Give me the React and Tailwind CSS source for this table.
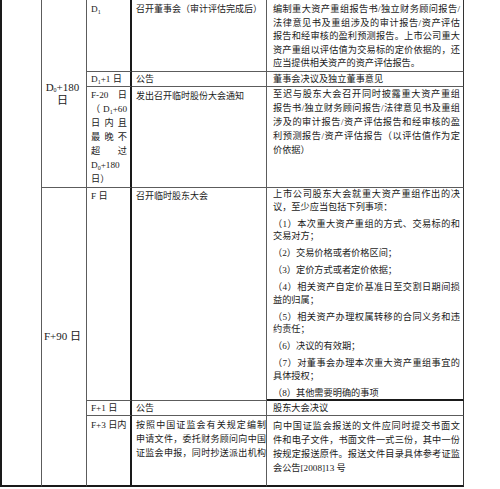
import React from "react";

// justified line block: every line but the last in a paragraph is stretched to full width
function Para({ lines, className = "" }) {
  return (
    <div className={className}>
      {lines.map((t, i) => (
        <div key={i} className={i < lines.length - 1 ? "[text-align-last:justify]" : ""}>
          {t}
        </div>
      ))}
    </div>
  );
}

const S = ({ children }) => <sub className="text-[6px]">{children}</sub>;

const thinR = "border-r border-r-[#5c5c5c]";
const thinB = "border-b border-b-[#5c5c5c]";
const thickB = "border-b-2 border-b-[#1a1a1a]";

const c2 = "col-start-3 border-r-2 border-r-[#1a1a1a] pl-[4px] pr-[3px]";
const c3 = "col-start-4 pl-[4px] text-[9px] " + thinR;
const c4 = "col-start-5 border-r border-r-[#333] pl-[6px] pr-[3px]";

export default function App() {
  return (
    <div className="h-[489px] w-[500px] overflow-hidden bg-white text-[9.2px] text-[#1a1a1a] [font-family:'Liberation_Serif','Noto_Sans_CJK_SC',serif]">
      <div className="grid w-[464px] grid-cols-[42px_45px_45px_135px_197px] grid-rows-[72px_15px_101px_213px_15px_71px]">
        {/* blank first column */}
        <div className={`col-start-1 row-start-1 row-span-6 border-l-2 border-l-[#1a1a1a] ${thinR} ${thickB}`} />

        {/* period column */}
        <div className={`col-start-2 row-start-1 row-span-3 flex flex-col items-center justify-center pr-[3px] text-[11px] leading-[13px] ${thinR} ${thinB}`}>
          <div>
            D<S>0</S>+180
          </div>
          <div>日</div>
        </div>
        <div className={`col-start-2 row-start-4 row-span-3 flex items-center justify-center pr-[3px] text-[11px] ${thinR} ${thickB}`}>
          F+90 日
        </div>

        {/* row 1 */}
        <div className={`${c2} row-start-1 pt-[3px] leading-[13.6px] ${thinB}`}>
          D<S>1</S>
        </div>
        <div className={`${c3} row-start-1 pt-[3px] leading-[13.6px] ${thinB}`}>召开董事会（审计评估完成后）</div>
        <div className={`${c4} row-start-1 pt-[3px] leading-[13.6px] ${thinB}`}>
          <Para
            lines={[
              "编制重大资产重组报告书/独立财务顾问报告/",
              "法律意见书及重组涉及的审计报告/资产评估",
              "报告和经审核的盈利预测报告。上市公司重大",
              "资产重组以评估值为交易标的定价依据的，还",
              "应当提供相关资产的资产评估报告。",
            ]}
          />
        </div>

        {/* row 2 */}
        <div className={`${c2} row-start-2 pt-[1px] leading-[13px] ${thinB}`}>
          D<S>1</S>+1 日
        </div>
        <div className={`${c3} row-start-2 pt-[1px] leading-[13px] ${thinB}`}>公告</div>
        <div className={`${c4} row-start-2 pt-[1px] leading-[13px] ${thinB}`}>董事会决议及独立董事意见</div>

        {/* row 3 */}
        <div className={`${c2} row-start-3 pt-[1px] leading-[14px] ${thinB}`}>
          <div className="[text-align-last:justify]">F-20 日</div>
          <div className="[text-align-last:justify]">
            （D<S>1</S>+60
          </div>
          <div className="[text-align-last:justify]">日 内 且</div>
          <div className="[text-align-last:justify]">最 晚 不</div>
          <div className="[text-align-last:justify]">超 过</div>
          <div>
            D<S>0</S>+180
          </div>
          <div>日）</div>
        </div>
        <div className={`${c3} row-start-3 pt-[2px] leading-[14px] ${thinB}`}>发出召开临时股份大会通知</div>
        <div className={`${c4} row-start-3 pt-0 leading-[14px] ${thinB}`}>
          <Para
            lines={[
              "至迟与股东大会召开同时披露重大资产重组",
              "报告书/独立财务顾问报告/法律意见书及重组",
              "涉及的审计报告/资产评估报告和经审核的盈",
              "利预测报告/资产评估报告（以评估值作为定",
              "价依据）",
            ]}
          />
        </div>

        {/* row 4 */}
        <div className={`${c2} row-start-4 pt-[1px] leading-[14px] ${thinB}`}>F 日</div>
        <div className={`${c3} row-start-4 pt-[1px] leading-[14px] ${thinB}`}>召开临时股东大会</div>
        <div className={`${c4} row-start-4 flex flex-col gap-[4.5px] pt-0 leading-[12.5px] ${thickB}`}>
          <Para lines={["上市公司股东大会就重大资产重组作出的决", "议，至少应当包括下列事项："]} />
          <Para lines={["（1）本次重大资产重组的方式、交易标的和", "交易对方；"]} />
          <Para lines={["（2）交易价格或者价格区间；"]} />
          <Para lines={["（3）定价方式或者定价依据；"]} />
          <Para lines={["（4）相关资产自定价基准日至交割日期间损", "益的归属；"]} />
          <Para lines={["（5）相关资产办理权属转移的合同义务和违", "约责任；"]} />
          <Para lines={["（6）决议的有效期；"]} />
          <Para lines={["（7）对董事会办理本次重大资产重组事宜的", "具体授权；"]} />
          <Para lines={["（8）其他需要明确的事项"]} />
        </div>

        {/* row 5 */}
        <div className={`${c2} row-start-5 pt-[1px] leading-[13px] ${thinB}`}>F+1 日</div>
        <div className={`${c3} row-start-5 pt-[1px] leading-[13px] ${thinB}`}>公告</div>
        <div className={`${c4} row-start-5 pt-[1px] leading-[13px] ${thinB}`}>股东大会决议</div>

        {/* row 6 */}
        <div className={`${c2} row-start-6 pt-[2px] leading-[14px] ${thickB}`}>F+3 日内</div>
        <div className={`${c3} row-start-6 pt-[2px] leading-[14px] ${thickB}`}>
          <Para
            lines={["按照中国证监会有关规定编制", "申请文件，委托财务顾问向中国", "证监会申报，同时抄送派出机构"]}
            className="[&>div:last-child]:[text-align-last:justify]"
          />
        </div>
        <div className={`${c4} row-start-6 pt-[3px] leading-[14px] ${thickB}`}>
          <Para
            lines={[
              "向中国证监会报送的文件应同时提交书面文",
              "件和电子文件，书面文件一式三份，其中一份",
              "按规定报送原件。报送文件目录具体参考证监",
              "会公告[2008]13 号",
            ]}
          />
        </div>
      </div>
    </div>
  );
}
